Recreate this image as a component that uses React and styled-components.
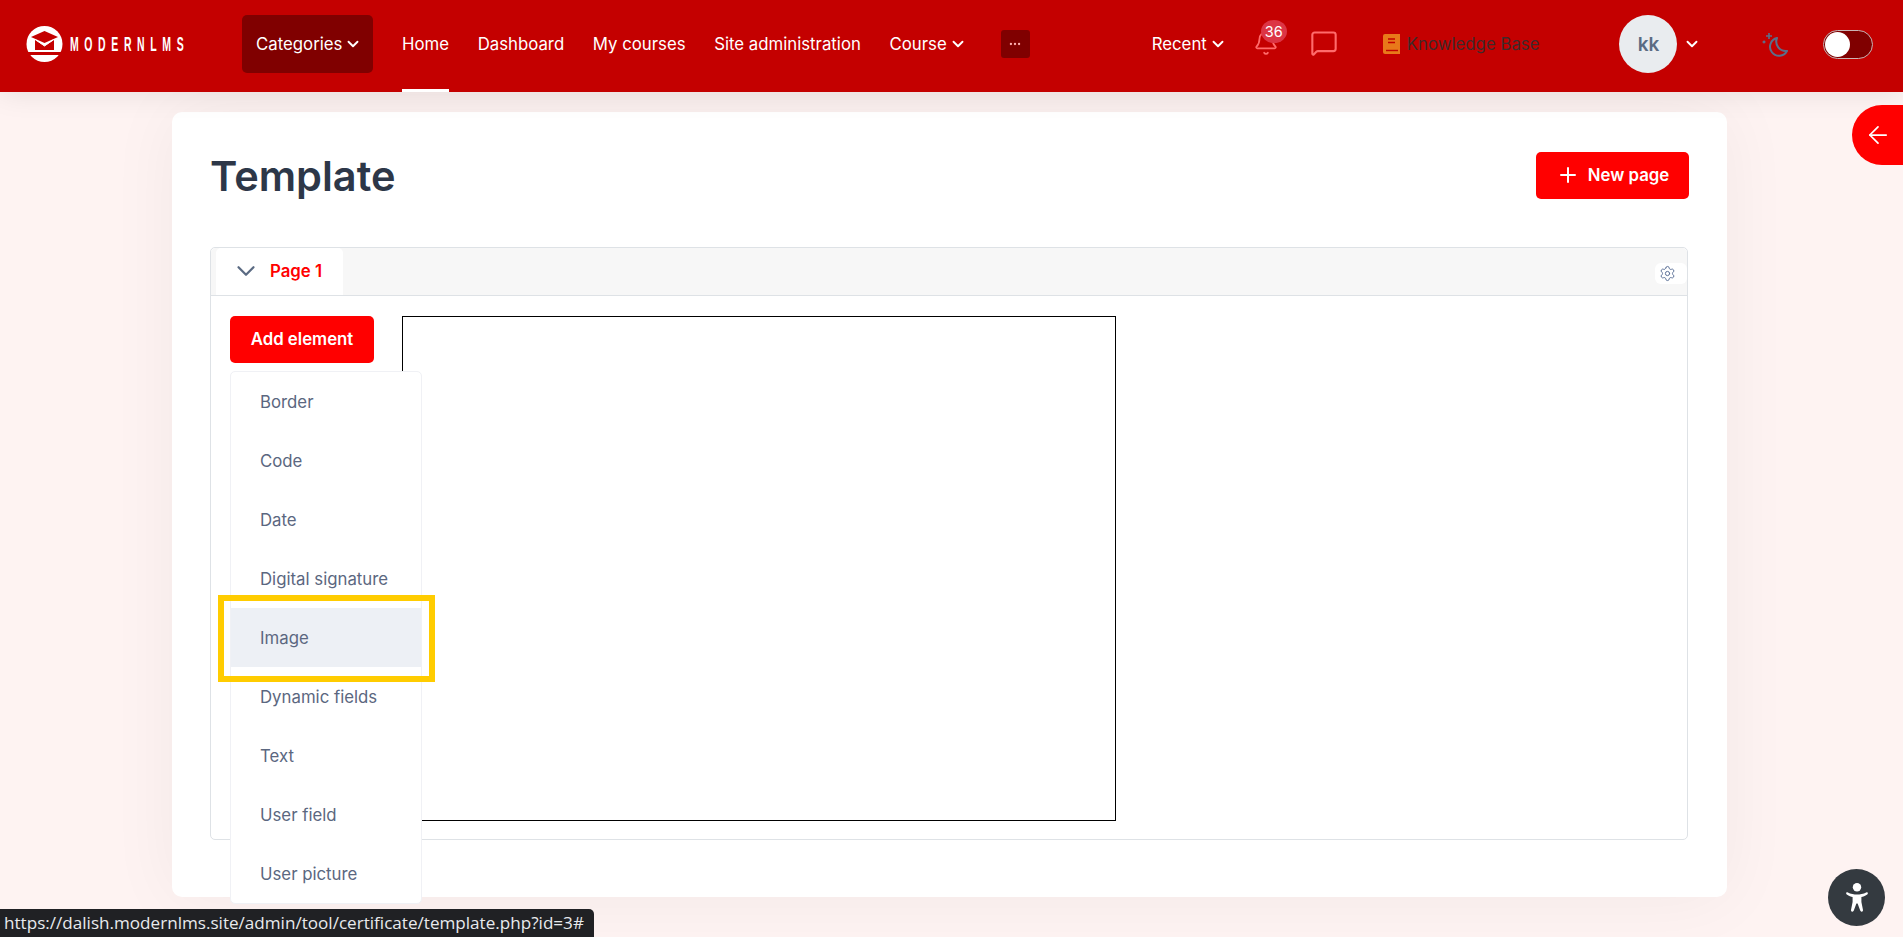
import React from 'react';
import styled, { createGlobalStyle } from 'styled-components';
import { Bell, MessageSquare, ChevronDown, Plus, ArrowLeft, Settings, Ellipsis } from 'lucide-react';

const GlobalStyle = createGlobalStyle`
    html, body {
        margin: 0;
        height: 100%;
        overflow: hidden;
        background: #fef3f2;
        font-family: 'Inter', 'Liberation Sans', sans-serif;
    }
    * {
        box-sizing: border-box;
    }
`;

const Header = styled.header`
    height: 92px;
    background: #c40000;
    display: flex;
    align-items: center;
    padding: 0 0 4px 26px;
    color: #fff;
    box-shadow: 0 0 30px rgba(0, 0, 0, 0.1);
    position: relative;
`;

const Logo = styled.a`
    width: 161px;
    margin-right: 55px;
    display: flex;
    align-items: center;
    gap: 7px;
`;

const LogoText = styled.span`
    display: block;
    width: 114px;
    flex-shrink: 0;
    white-space: nowrap;
    font-family: 'Liberation Sans', sans-serif;
    font-weight: 700;
    font-size: 21px;
    letter-spacing: 11.2px;
    color: #fff;
    transform: scaleX(0.5);
    transform-origin: left center;
`;

const CategoriesButton = styled.a`
    width: 131px;
    height: 58px;
    background: #800000;
    border-radius: 5px;
    display: flex;
    align-items: center;
    gap: 2px;
    padding: 0 0 1px 14px;
    font-size: 16.8px;
    margin-right: 29px;
`;

const NavLink = styled.a`
    height: 92px;
    align-self: flex-start;
    display: flex;
    align-items: center;
    gap: 2px;
    font-size: 16.8px;
    margin-right: ${props => props.$gap ?? 28.6}px;
    color: #fff;
    border-bottom: 3px solid ${props => (props.$active ? '#fff' : 'transparent')};
    border-top: 3px solid transparent;
    padding-bottom: 4px;
    margin-bottom: -4px;
`;

const MoreButton = styled.a`
    width: 29px;
    height: 28px;
    background: #800000;
    border-radius: 3px;
    display: flex;
    align-items: center;
    justify-content: center;
    color: #ffb0b0;
    margin-right: 122px;
`;

const IconButton = styled.a`
    display: flex;
    position: relative;
    color: #ff6b6b;
    margin-left: ${props => props.$left}px;
    margin-bottom: 2px;
`;

const Badge = styled.span`
    position: absolute;
    left: 8px;
    top: -10px;
    width: 26px;
    height: 23px;
    border-radius: 50%;
    background: #dc3545;
    color: #fff;
    font-size: 14.5px;
    display: flex;
    align-items: center;
    justify-content: center;
`;

const KnowledgeLink = styled.a`
    display: flex;
    align-items: center;
    gap: 7px;
    margin-left: 45px;
    font-size: 16.8px;
    color: #3f2a2a;
`;

const Avatar = styled.span`
    width: 58px;
    height: 58px;
    margin-left: 80px;
    border-radius: 50%;
    background: #e9ecef;
    color: #5b6b83;
    font-size: 19px;
    font-weight: 600;
    display: flex;
    align-items: center;
    justify-content: center;
`;

const UserCaret = styled.span`
    display: flex;
    margin-left: 6px;
    margin-right: 61px;
`;

const ThemeSwitch = styled.span`
    width: 50px;
    height: 29px;
    margin-left: 35px;
    border-radius: 15px;
    background: #800000;
    border: 1px solid #c9b5b5;
    display: flex;
    align-items: center;
    padding-left: 1px;
`;

const Knob = styled.span`
    width: 25px;
    height: 25px;
    border-radius: 50%;
    background: #fff;
`;

const Main = styled.main`
    padding: 20px 176px 0 172px;
`;

const Card = styled.section`
    height: 785px;
    background: #fff;
    border-radius: 10px;
    padding: 40px 38px 0;
    box-shadow: 0 0 70px rgba(0, 0, 0, 0.05);
`;

const TitleRow = styled.div`
    height: 47px;
    display: flex;
    justify-content: space-between;
    align-items: center;
    margin-bottom: 48px;
`;

const Title = styled.h1`
    margin: 2px 0 0;
    font-size: 41.5px;
    font-weight: 600;
    color: #2d3748;
    line-height: 47px;
`;

const RedButton = styled.a`
    height: 47px;
    background: #f00;
    border-radius: 5px;
    color: #fff;
    font-size: 16.8px;
    font-weight: 600;
    display: inline-flex;
    align-items: center;
    justify-content: center;
    gap: 8px;
    padding-bottom: 2px;
    width: ${props => props.$width}px;
`;

const Panel = styled.div`
    width: 1478px;
    height: 593px;
    border: 1px solid #dee2e6;
    border-radius: 5px;
`;

const PanelHeader = styled.div`
    height: 48px;
    background: #f7f7f7;
    border-bottom: 1px solid #dee2e6;
    border-radius: 5px 5px 0 0;
    display: flex;
    justify-content: space-between;
    padding-left: 5px;
`;

const Tab = styled.a`
    width: 127px;
    height: 47px;
    background: #fff;
    border-radius: 5px 5px 0 0;
    display: flex;
    align-items: center;
    gap: 9px;
    padding: 0 0 1px 15px;
    color: #f00;
    font-size: 16.8px;
    font-weight: 600;
`;

const GearButton = styled.a`
    width: 32px;
    height: 21px;
    margin-top: 15px;
    background: #fff;
    border-radius: 6px;
    display: flex;
    align-items: center;
    justify-content: center;
    color: #5b6f96;
    padding-right: 8px;
`;

const PanelBody = styled.div`
    display: flex;
    gap: 28px;
    padding: 20px 19px;
`;

const MenuWrap = styled.div`
    position: relative;
    width: 144px;
`;

const Menu = styled.ul`
    position: absolute;
    left: 0;
    top: 55px;
    width: 192px;
    margin: 0;
    padding: 0;
    list-style: none;
    background: #fff;
    border: 1px solid #f0f1f5;
    border-radius: 5px;
    z-index: 2;
`;

const MenuItem = styled.li`
    height: 59px;
    display: flex;
    align-items: center;
    padding-left: 29px;
    font-size: 16.8px;
    color: #5b6780;
    background: ${props => (props.$active ? '#edf0f5' : 'transparent')};
`;

const Highlight = styled.span`
    position: absolute;
    left: -13px;
    top: 223px;
    width: 217px;
    height: 87px;
    border: 6px solid #ffcc00;
`;

const Canvas = styled.div`
    width: 714px;
    height: 505px;
    border: 1px solid #000;
`;

const SideToggle = styled.a`
    position: fixed;
    right: 0;
    top: 105px;
    width: 51px;
    height: 60px;
    background: #f00;
    border-radius: 30px 0 0 30px;
    color: #fff;
    display: flex;
    align-items: center;
    justify-content: center;
`;

const AccessButton = styled.a`
    position: fixed;
    left: 1828px;
    top: 869px;
    width: 57px;
    height: 57px;
    border-radius: 50%;
    background: #343a40;
    display: flex;
    align-items: center;
    justify-content: center;
`;

const StatusBubble = styled.div`
    position: fixed;
    left: 0;
    bottom: 0;
    width: 594px;
    height: 28px;
    background: #202124;
    border-radius: 0 5px 0 0;
    color: #e8eaed;
    font-family: 'Open Sans', sans-serif;
    font-size: 17.1px;
    line-height: 27px;
    padding-left: 4px;
    white-space: nowrap;
`;

const MarkSvg = styled.svg`
    flex-shrink: 0;
`;

const LogoMark = () => (
    <MarkSvg width="37" height="37" viewBox="0 0 37 37">
        <circle cx="18.5" cy="18" r="18" fill="#fff" />
        <path d="M0 26 H37 V29 H0 Z" fill="#c40000" />
        <path d="M18.5 5 L32 11 L18.5 17 L5 11 Z" fill="#c40000" />
        <path d="M9 14 V24 H28 V14 L18.5 20 Z" fill="#c40000" />
        <path d="M10 14 L18.5 20 L27 14" fill="none" stroke="#fff" strokeWidth="1" />
    </MarkSvg>
);

const BookIcon = () => (
    <svg width="17" height="20" viewBox="0 0 17 20">
        <path d="M2 0 H17 V20 H2 A2 2 0 0 1 0 18 V2 A2 2 0 0 1 2 0 Z" fill="#e8791a" />
        <path d="M5 5 H12 M5 8.5 H12" stroke="#c40000" strokeWidth="1.4" />
        <path d="M3 16.5 H15" stroke="#c40000" strokeWidth="1.4" />
    </svg>
);

const MoonIcon = () => (
    <svg width="26" height="25" viewBox="0 0 26 25" fill="none" stroke="#5b6f8a" strokeWidth="2">
        <path d="M15 6 A9 9 0 1 0 25 19 A9.5 9.5 0 0 1 15 6 Z" strokeLinejoin="round" />
        <path d="M7 1 V7 M4 4 H10" strokeWidth="1.6" />
        <path d="M2 9 L3 10 L2 11 L1 10 Z" strokeWidth="1.2" />
    </svg>
);

const PersonIcon = () => (
    <svg width="22" height="29" viewBox="0 0 22 29" fill="#fff">
        <circle cx="11" cy="4.2" r="4.2" />
        <path d="M1.4 9.2 C5 11 8 11.6 11 11.6 C14 11.6 17 11 20.6 9.2 C21.8 8.8 22.4 10.6 21.2 11.4 C19 12.8 17 13.6 15.4 14 V19 L17 27 C17.2 28.8 14.8 29.4 14.2 27.6 L11.6 20.5 H10.4 L7.8 27.6 C7.2 29.4 4.8 28.8 5 27 L6.6 19 V14 C5 13.6 3 12.8 .8 11.4 C-.4 10.6 .2 8.8 1.4 9.2 Z" />
    </svg>
);

const elements = [
    'Border',
    'Code',
    'Date',
    'Digital signature',
    'Image',
    'Dynamic fields',
    'Text',
    'User field',
    'User picture',
];

const App = () => (
    <>
        <GlobalStyle />
        <Header>
            <Logo>
                <LogoMark />
                <LogoText>MODERNLMS</LogoText>
            </Logo>
            <CategoriesButton>
                Categories <ChevronDown size={18} strokeWidth={2.5} />
            </CategoriesButton>
            <NavLink $active>Home</NavLink>
            <NavLink>Dashboard</NavLink>
            <NavLink>My courses</NavLink>
            <NavLink>Site administration</NavLink>
            <NavLink $gap={34}>
                Course <ChevronDown size={18} strokeWidth={2.5} />
            </NavLink>
            <MoreButton>
                <Ellipsis size={14} />
            </MoreButton>
            <NavLink $gap={0}>
                Recent <ChevronDown size={18} strokeWidth={2.5} />
            </NavLink>
            <IconButton $left={26}>
                <Bell size={26} strokeWidth={1.6} />
                <Badge>36</Badge>
            </IconButton>
            <IconButton $left={31}>
                <MessageSquare size={28} strokeWidth={1.8} />
            </IconButton>
            <KnowledgeLink>
                <BookIcon />
                Knowledge Base
            </KnowledgeLink>
            <Avatar>kk</Avatar>
            <UserCaret>
                <ChevronDown size={18} strokeWidth={2.5} />
            </UserCaret>
            <MoonIcon />
            <ThemeSwitch>
                <Knob />
            </ThemeSwitch>
        </Header>
        <Main>
            <Card>
                <TitleRow>
                    <Title>Template</Title>
                    <RedButton $width={153}>
                        <Plus size={24} strokeWidth={2} /> New page
                    </RedButton>
                </TitleRow>
                <Panel>
                    <PanelHeader>
                        <Tab>
                            <ChevronDown size={30} color="#5b6b83" strokeWidth={1.8} />
                            Page 1
                        </Tab>
                        <GearButton>
                            <Settings size={17} strokeWidth={1.4} />
                        </GearButton>
                    </PanelHeader>
                    <PanelBody>
                        <MenuWrap>
                            <RedButton $width={144}>Add element</RedButton>
                            <Menu>
                                {elements.map(name => (
                                    <MenuItem key={name} $active={name === 'Image'}>{name}</MenuItem>
                                ))}
                                <Highlight />
                            </Menu>
                        </MenuWrap>
                        <Canvas />
                    </PanelBody>
                </Panel>
            </Card>
        </Main>
        <SideToggle>
            <ArrowLeft size={28} strokeWidth={1.5} />
        </SideToggle>
        <AccessButton>
            <PersonIcon />
        </AccessButton>
        <StatusBubble>https://dalish.modernlms.site/admin/tool/certificate/template.php?id=3#</StatusBubble>
    </>
);

export default App;
